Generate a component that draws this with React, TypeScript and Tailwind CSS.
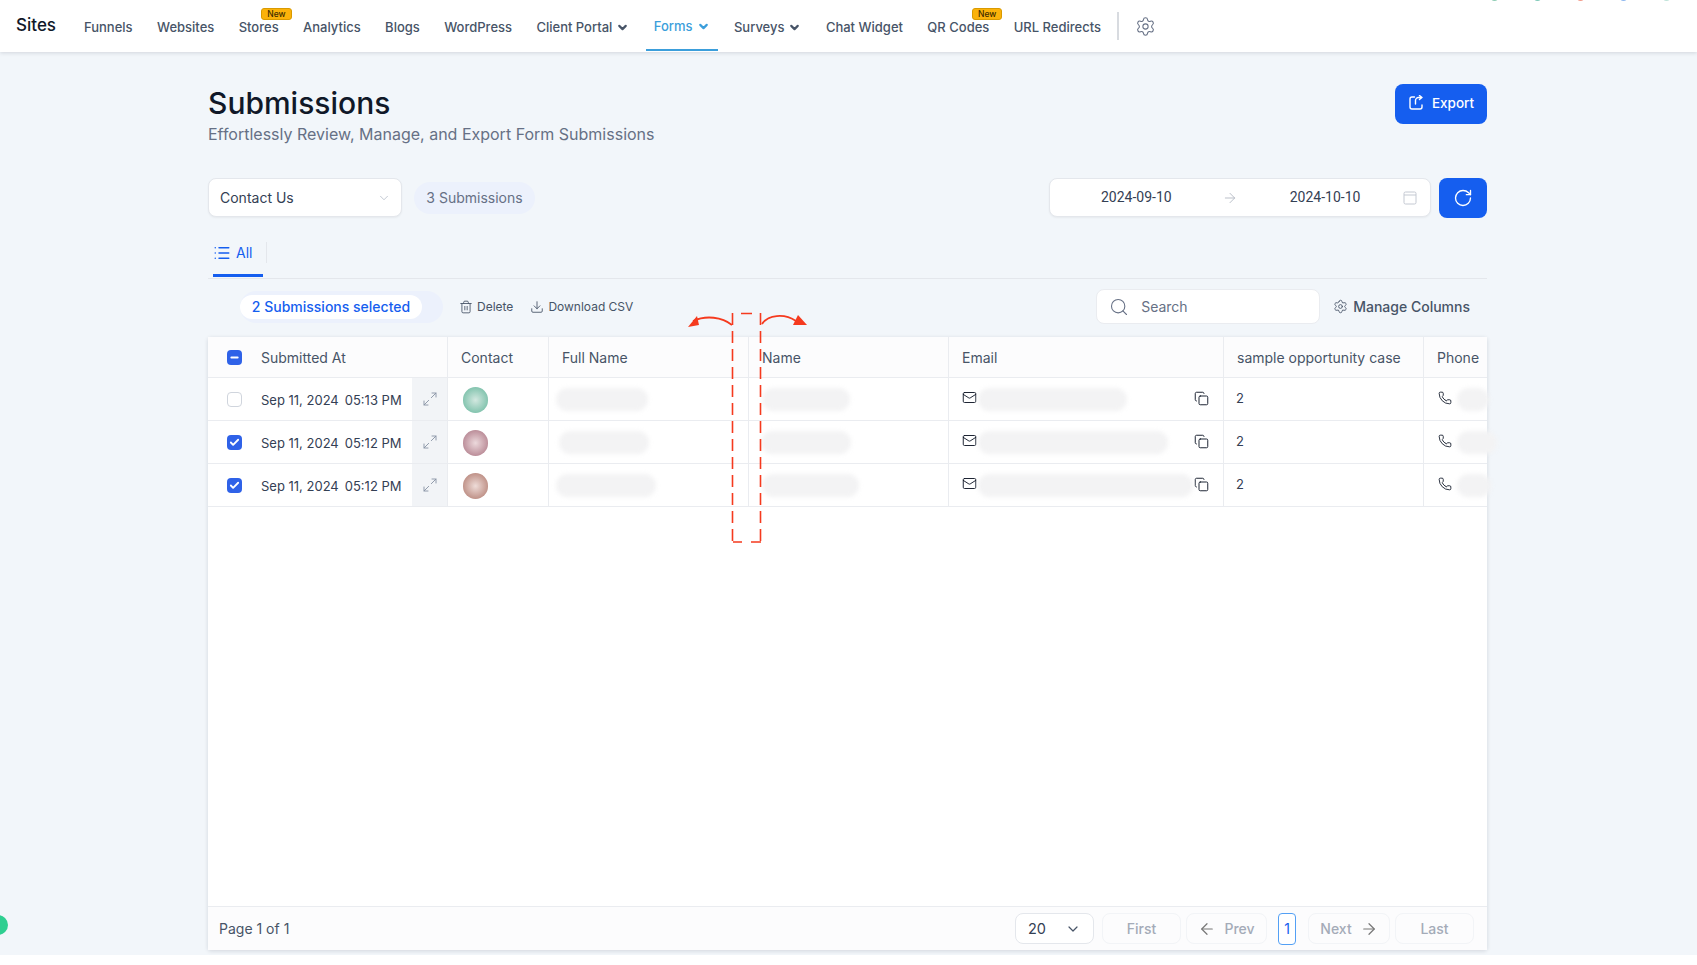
import { ArrowLeft, ArrowRight, Check, ChevronDown, Copy, Download, List, Mail, Maximize2, Minus, Phone, RotateCw, Search, Settings, Trash2 } from "lucide-react";

const navItems = [
  { label: "Funnels" },
  { label: "Websites" },
  { label: "Stores", badge: true },
  { label: "Analytics" },
  { label: "Blogs" },
  { label: "WordPress" },
  { label: "Client Portal", chevron: true },
  { label: "Forms", chevron: true, active: true },
  { label: "Surveys", chevron: true },
  { label: "Chat Widget" },
  { label: "QR Codes", badge: true },
  { label: "URL Redirects" },
];

const rows = [
  { date: "Sep 11, 2024", hour: "05:13 PM", checked: false, avatar: "radial-gradient(circle at 50% 50%, #d3e8e0 0%, #7fc2ac 75%)", full: [92, 7], name: [88, 13], email: 149, phone: 32 },
  { date: "Sep 11, 2024", hour: "05:12 PM", checked: true, avatar: "radial-gradient(circle at 50% 50%, #ecd9dc 0%, #b98a96 75%)", full: [90, 10], name: [90, 12], email: 190, phone: 40 },
  { date: "Sep 11, 2024", hour: "05:12 PM", checked: true, avatar: "radial-gradient(circle at 50% 50%, #eedcd8 0%, #bd8e84 75%)", full: [100, 7], name: [97, 13], email: 215, phone: 34 },
];

function Blur({ width, offset = 0 }: { width: number; offset?: number }) {
  return <div className="h-[23px] shrink-0 rounded-full bg-[#f3f3f4] blur-[2px]" style={{ width, marginLeft: offset }} />;
}

function PageButton({ children, width }: { children: React.ReactNode; width: string }) {
  return (
    <div className={`flex h-[31px] items-center justify-center gap-2 rounded-lg border border-[#f2f4f7] bg-[#fcfcfd] text-[14px] font-medium text-[#a4abb8] ${width}`}>
      {children}
    </div>
  );
}

export default function App() {
  return (
    <div className="relative h-[965px] w-[1697px] overflow-hidden bg-white font-['Inter',sans-serif]">
      <header className="relative z-10 flex h-[52px] items-center bg-white pl-[16px] shadow-[0_1px_4px_rgba(16,24,40,0.14)]">
        <span className="w-[68px] text-[17px] font-medium text-[#101828]">Sites</span>
        <nav className="flex h-full items-center gap-[24.4px]">
          {navItems.map((item) => (
            <div key={item.label} className={`relative flex h-full items-center gap-[4px] pt-[3px] text-[13px] font-medium ${item.active ? "text-[#3b9edb]" : "text-[#475467]"}`}>
              {item.active && <div className="absolute -left-[8px] -right-[8px] bottom-[1px] h-[2px] bg-[#3b9edb]" />}
              <span className={item.active ? "-mt-[2px]" : ""}>{item.label}</span>
              {item.chevron && <ChevronDown size={13} strokeWidth={4} className={item.active ? "-mt-[2px]" : ""} />}
              {item.badge && (
                <span className="absolute -right-[13px] top-[8px] rounded-[3px] border border-[#d99a00] bg-[#fbb20a] px-[5px] text-[8.5px] font-medium leading-[10px] text-[#3d2c00]">New</span>
              )}
            </div>
          ))}
        </nav>
        <div className="ml-[16px] h-[28px] w-[2px] bg-[#d8dbe0]" />
        <Settings size={21} strokeWidth={1.2} className="ml-[16px] text-[#667085]" />
        <div className="absolute right-[27px] -top-[6px] flex gap-[36px]">
          <span className="h-[7px] w-[7px] rounded-full bg-[#8fcdb4]" />
          <span className="h-[7px] w-[7px] rounded-full bg-[#7fc9b8]" />
          <span className="h-[7px] w-[7px] rounded-full bg-[#f29a8a]" />
          <span className="h-[7px] w-[7px] rounded-full bg-[#8fb8ef]" />
          <span className="h-[7px] w-[7px] rounded-full bg-[#bfe3d8]" />
        </div>
      </header>

      <main className="relative h-[903px] bg-[#f2f6fa] pl-[208px] pt-[32px]">
        <div className="w-[1279px]">
          <div className="flex items-start justify-between">
            <div>
              <h1 className="text-[30px] font-medium leading-[38px] text-[#101828]">Submissions</h1>
              <p className="text-[16px] leading-[24px] text-[#667085]">Effortlessly Review, Manage, and Export Form Submissions</p>
            </div>
            <button className="flex h-[40px] w-[92px] items-center justify-center gap-[8px] rounded-lg bg-[#155eef] pb-[2px] text-[13.5px] font-medium text-white">
              <svg width="16" height="16" viewBox="0 0 16 16" fill="none" stroke="currentColor" strokeWidth="1.4" strokeLinecap="round" strokeLinejoin="round">
                <path d="M6.5 2H4a2 2 0 0 0-2 2v8a2 2 0 0 0 2 2h8a2 2 0 0 0 2-2V10" />
                <path d="M14 2.5h-3.5A3 3 0 0 0 7.5 5.5V9M11.5 0.5l2.5 2-2.5 2" />
              </svg>
              Export
            </button>
          </div>

          <div className="mt-[32px] flex h-[39px] items-center">
            <div className="flex h-[39px] w-[194px] items-center justify-between rounded-lg border border-[#e4e7ec] bg-white pl-[11px] pr-[10px] text-[14px] text-[#344054] shadow-xs">
              Contact Us
              <ChevronDown size={14} strokeWidth={1} className="text-[#98a2b3]" />
            </div>
            <div className="ml-[12px] flex h-[32px] w-[121px] items-center justify-center rounded-full bg-[#ecf1fc] text-[14px] text-[#667085]">3 Submissions</div>
            <div className="ml-auto flex h-[39px] w-[382px] items-center rounded-lg border border-[#e4e7ec] bg-white font-['Roboto',sans-serif] text-[14px] text-[#344054] shadow-xs">
              <span className="ml-[51px]">2024-09-10</span>
              <ArrowRight size={16} strokeWidth={1.3} className="ml-[50px] text-[#b0b6c0]" />
              <span className="ml-[52px]">2024-10-10</span>
              <svg width="14" height="14" viewBox="0 0 14 14" fill="none" stroke="#c4c9d2" strokeWidth="1" className="ml-[43px]">
                <rect x="1" y="1" width="12" height="12" rx="1.5" />
                <path d="M1 4h12" />
              </svg>
            </div>
            <button className="ml-[8px] flex h-[40px] w-[48px] items-center justify-center rounded-lg bg-[#155eef] text-white">
              <RotateCw size={20} strokeWidth={1.6} />
            </button>
          </div>

          <div className="flex h-[62px] border-b border-[#e4e7ec]">
            <div className="ml-[5px] flex h-[60px] w-[50px] items-center gap-[5px] border-b-[3px] border-[#155eef] pt-[14px] text-[14px] text-[#155eef]">
              <List size={18} strokeWidth={2} />
              All
            </div>
            <div className="ml-[3px] mt-[25px] h-[21px] w-px bg-[#e4e7ec]" />
          </div>

          <div className="flex h-[58px] items-center pb-[3px]">
            <div className="ml-[32px] flex h-[32px] w-[203px] items-center rounded-full bg-[#ecf1fc]">
              <div className="flex h-[24px] w-[182px] items-center justify-center rounded-full bg-white text-[14px] font-medium text-[#155eef]">2 Submissions selected</div>
            </div>
            <div className="ml-[16px] flex items-center gap-[4px] text-[12px] text-[#475467]">
              <Trash2 size={14} strokeWidth={1.5} />
              Delete
            </div>
            <div className="ml-[17px] flex items-center gap-[4px] text-[12px] text-[#475467]">
              <Download size={14} strokeWidth={1.5} />
              Download CSV
            </div>
            <div className="ml-auto flex h-[35px] w-[224px] items-center rounded-lg border border-[#eaecf0] bg-white pl-[12px] text-[14px] text-[#667085]">
              <Search size={20} strokeWidth={1.3} className="text-[#667085]" />
              <span className="ml-[12px]">Search</span>
            </div>
            <div className="ml-[13px] mr-[17px] flex items-center gap-[5px] text-[14px] font-medium text-[#475467]">
              <Settings size={15} strokeWidth={1.4} />
              Manage Columns
            </div>
          </div>

          <div className="flex h-[613px] flex-col rounded-[3px] bg-white shadow-[0_1px_4px_rgba(16,24,40,0.14)]">
            <div className="flex h-[41px] border-b border-[#eaecf0] bg-[#fcfcfd] text-[14px] text-[#475467]">
              <div className="flex w-[240px] shrink-0 items-center border-r border-[#eaecf0]">
                <span className="ml-[19px] mt-[1px] flex h-[15px] w-[15px] items-center justify-center rounded-[4px] bg-[#2f62e8] text-white"><Minus size={11} strokeWidth={4} /></span>
                <span className="ml-[19px]">Submitted At</span>
              </div>
              <div className="flex w-[101px] shrink-0 items-center border-r border-[#eaecf0] pl-[13px]">Contact</div>
              <div className="flex w-[200px] shrink-0 items-center border-r border-[#eaecf0] pl-[13px]">Full Name</div>
              <div className="flex w-[200px] shrink-0 items-center border-r border-[#eaecf0] pl-[13px]">Name</div>
              <div className="flex w-[275px] shrink-0 items-center border-r border-[#eaecf0] pl-[13px]">Email</div>
              <div className="flex w-[200px] shrink-0 items-center border-r border-[#eaecf0] pl-[13px]">sample opportunity case</div>
              <div className="flex shrink-0 items-center pl-[13px]">Phone</div>
            </div>
            {rows.map((row, i) => (
              <div key={i} className="flex h-[43px] border-b border-[#eaecf0] text-[13px] text-[#344054]">
                <div className="flex w-[240px] shrink-0 items-center border-r border-[#eaecf0]">
                  {row.checked ? (
                    <span className="ml-[19px] flex h-[15px] w-[15px] items-center justify-center rounded-[4px] bg-[#2f62e8] text-white"><Check size={11} strokeWidth={4} /></span>
                  ) : (
                    <span className="ml-[19px] h-[15px] w-[15px] rounded-[4px] border border-[#d0d5dd] bg-white" />
                  )}
                  <span className="ml-[19px] flex w-[151px] gap-[6px] pt-[3px]">
                    <span>{row.date}</span>
                    <span>{row.hour}</span>
                  </span>
                  <div className="flex h-full flex-1 items-center justify-center bg-[#f2f4f7] text-[#8a94a6]"><Maximize2 size={16} strokeWidth={1.4} /></div>
                </div>
                <div className="flex w-[101px] shrink-0 items-center border-r border-[#eaecf0] pl-[15px]">
                  <div className="mt-[2px] h-[26px] w-[25px] rounded-full" style={{ background: row.avatar }} />
                </div>
                <div className="flex w-[200px] shrink-0 items-center border-r border-[#eaecf0]"><Blur width={row.full[0]} offset={row.full[1]} /></div>
                <div className="flex w-[200px] shrink-0 items-center border-r border-[#eaecf0]"><Blur width={row.name[0]} offset={row.name[1]} /></div>
                <div className="flex w-[275px] shrink-0 items-center border-r border-[#eaecf0] pl-[13px] pr-[14px]">
                  <Mail size={15} strokeWidth={1.5} className="-mt-[3px] shrink-0 text-[#101828]" />
                  <div className="min-w-0 flex-1"><Blur width={row.email} offset={1} /></div>
                  <Copy size={15} strokeWidth={1.5} className="-mt-[2px] shrink-0 text-[#101828]" />
                </div>
                <div className="flex w-[200px] shrink-0 items-center border-r border-[#eaecf0] pl-[12px]">2</div>
                <div className="flex shrink-0 items-center pl-[14px]">
                  <Phone size={14} strokeWidth={1.5} className="-mt-[2px] shrink-0 text-[#101828]" />
                  <Blur width={row.phone} offset={5} />
                </div>
              </div>
            ))}
            <div className="mt-auto flex h-[44px] items-center border-t border-[#eaecf0] bg-[#fcfcfd] pl-[11px] text-[14px] text-[#475467]">
              Page 1 of 1
              <div className="ml-auto flex h-[31px] w-[79px] items-center justify-between rounded-lg border border-[#e4e7ec] bg-white pl-[12px] pr-[12px] text-[14.5px] text-[#344054]">
                20
                <ChevronDown size={16} strokeWidth={1.8} className="text-[#475467]" />
              </div>
              <div className="ml-[8px]"><PageButton width="w-[79px]">First</PageButton></div>
              <div className="ml-[5px]"><PageButton width="w-[81px]"><ArrowLeft size={18} strokeWidth={1.6} className="text-[#777]" />Prev</PageButton></div>
              <div className="ml-[11px] flex h-[32px] w-[18px] items-center justify-center rounded-[4px] border border-[#53a0f5] bg-white text-[14px] text-[#155eef]">1</div>
              <div className="ml-[12px]"><PageButton width="w-[82px]">Next<ArrowRight size={18} strokeWidth={1.6} className="text-[#777]" /></PageButton></div>
              <div className="ml-[5px] mr-[13px]"><PageButton width="w-[79px]">Last</PageButton></div>
            </div>
          </div>
        </div>

        <svg className="absolute left-[680px] top-[258px]" width="135" height="236" viewBox="0 0 135 236" fill="none">
          <path d="M52.5 3V231M80.5 3V231" stroke="#f53a1e" strokeWidth="1.6" strokeDasharray="12 6" />
          <path d="M53 232H62M71 232H81M61 3.5H72" stroke="#f53a1e" strokeWidth="1.6" />
          <path d="M52 15C42 7 26 5 13 11" stroke="#f53a1e" strokeWidth="1.8" />
          <path d="M8 17L17 6L19 15Z" fill="#f53a1e" />
          <path d="M82 14C88 5 104 3 116 11" stroke="#f53a1e" strokeWidth="1.8" />
          <path d="M127 15L113 15L118 5Z" fill="#f53a1e" />
        </svg>

        <div className="absolute -left-[12px] top-[863px] h-[20px] w-[20px] rounded-full bg-[#2fcf91]" />
      </main>
    </div>
  );
}
